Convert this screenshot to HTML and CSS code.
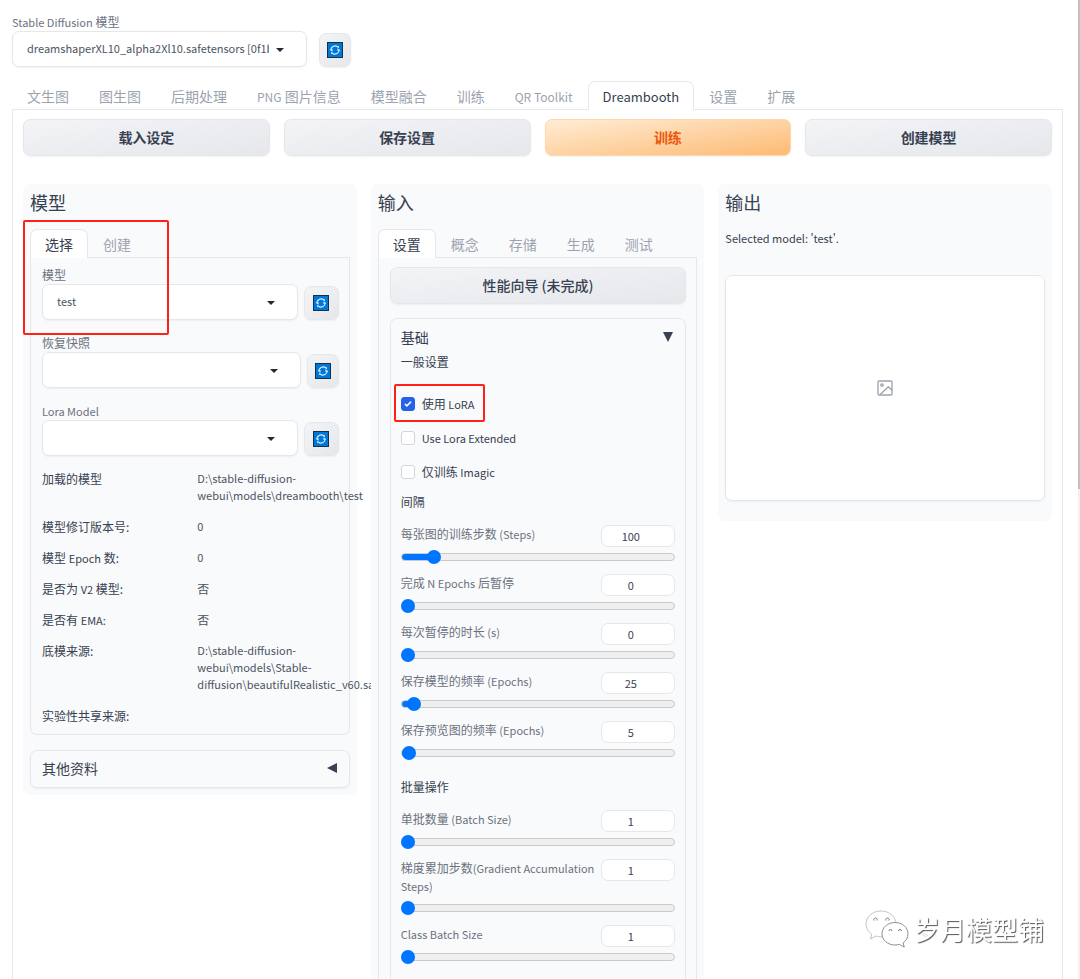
FILE: index.html
```html
<!DOCTYPE html>
<html lang="zh-CN">
<head>
<meta charset="utf-8">
<meta name="viewport" content="width=device-width, initial-scale=1">
<title>Stable Diffusion - Dreambooth</title>
<link rel="stylesheet" href="styles.css">
</head>
<body>
<svg class="defs" aria-hidden="true">
  <symbol id="refresh" viewBox="0 0 16 16">
    <rect x="0.5" y="0.5" width="15" height="15" fill="#0078d7" stroke="#17304a"/>
    <g fill="none" stroke="#d6ebff" stroke-width="1.1">
      <path d="M4 8.600A4.100 4.100 0 0 1 10.800 5M12 7.400A4.100 4.100 0 0 1 5.200 11"/>
    </g>
    <path d="M2.700 7.200h2.900v2.600zM13.300 8.800h-2.900V6.200zM9.500 4.200h2.500v2.300zM6.500 11.800H4V9.500z" fill="#d6ebff"/>
  </symbol>
  <symbol id="caret" viewBox="0 0 8 4"><path d="M0 0h8L4 4z" fill="#1f2937"/></symbol>
</svg>

<div class="page">
  <header class="checkpoint">
    <div class="field checkpoint-field">
      <label for="checkpoint"><span class="latin">Stable Diffusion</span> 模型</label>
      <div class="select">
        <select id="checkpoint"><option>dreamshaperXL10_alpha2Xl10.safetensors [0f1b80cfe8]</option></select>
        <svg class="caret"><use href="#caret"/></svg>
      </div>
    </div>
    <button class="tool tool-narrow" type="button" aria-label="刷新"><svg><use href="#refresh"/></svg></button>
  </header>

  <nav class="tabs">
    <button type="button">文生图</button>
    <button type="button">图生图</button>
    <button type="button">后期处理</button>
    <button type="button"><span class="latin">PNG</span> 图片信息</button>
    <button type="button">模型融合</button>
    <button type="button">训练</button>
    <button type="button"><span class="latin">QR Toolkit</span></button>
    <button type="button" class="selected"><span class="latin">Dreambooth</span></button>
    <button type="button">设置</button>
    <button type="button">扩展</button>
  </nav>

  <main class="workspace">
    <div class="actions">
      <button class="btn" type="button">载入设定</button>
      <button class="btn" type="button">保存设置</button>
      <button class="btn primary" type="button">训练</button>
      <button class="btn" type="button">创建模型</button>
    </div>

    <div class="columns">
      <section class="panel">
        <h2>模型</h2>
        <div class="tabs">
          <button type="button" class="selected">选择</button>
          <button type="button">创建</button>
        </div>
        <div class="tab-body model-body">
          <div class="row">
            <div class="field">
              <label for="model">模型</label>
              <div class="select">
                <select id="model"><option>test</option></select>
                <svg class="caret"><use href="#caret"/></svg>
              </div>
            </div>
            <button class="tool" type="button" aria-label="刷新"><svg><use href="#refresh"/></svg></button>
          </div>
          <div class="row">
            <div class="field">
              <label for="snapshot">恢复快照</label>
              <div class="select">
                <select id="snapshot"><option></option></select>
                <svg class="caret"><use href="#caret"/></svg>
              </div>
            </div>
            <button class="tool tool-narrow" type="button" aria-label="刷新"><svg><use href="#refresh"/></svg></button>
          </div>
          <div class="row">
            <div class="field">
              <label for="lora"><span class="latin">Lora Model</span></label>
              <div class="select">
                <select id="lora"><option></option></select>
                <svg class="caret"><use href="#caret"/></svg>
              </div>
            </div>
            <button class="tool" type="button" aria-label="刷新"><svg><use href="#refresh"/></svg></button>
          </div>
          <dl class="info">
            <dt>加载的模型</dt><dd class="latin">D:\stable-diffusion-webui\models\dreambooth\test</dd>
            <dt>模型修订版本号:</dt><dd class="latin">0</dd>
            <dt>模型 <span class="latin">Epoch</span> 数:</dt><dd class="latin">0</dd>
            <dt>是否为 <span class="latin">V2</span> 模型:</dt><dd>否</dd>
            <dt>是否有 <span class="latin">EMA:</span></dt><dd>否</dd>
            <dt>底模来源:</dt><dd class="latin">D:\stable-diffusion-webui\models\Stable-diffusion\beautifulRealistic_v60.safetensors</dd>
            <dt>实验性共享来源:</dt><dd></dd>
          </dl>
        </div>
        <button class="accordion" type="button" aria-expanded="false">
          <span>其他资料</span>
          <svg viewBox="0 0 10 10" aria-hidden="true"><path d="M10 0v10L0 5z" fill="#374151"/></svg>
        </button>
        <div class="mark mark-model"></div>
      </section>

      <section class="panel">
        <h2>输入</h2>
        <div class="tabs">
          <button type="button" class="selected">设置</button>
          <button type="button">概念</button>
          <button type="button">存储</button>
          <button type="button">生成</button>
          <button type="button">测试</button>
        </div>
        <div class="tab-body input-body">
          <button class="btn" type="button">性能向导 (未完成)</button>
          <div class="group">
            <button class="group-head" type="button" aria-expanded="true">
              <span>基础</span>
              <svg viewBox="0 0 10 10" aria-hidden="true"><path d="M0 0h10L5 10z" fill="#374151"/></svg>
            </button>
            <h3>一般设置</h3>
            <div class="checks">
              <label class="check"><input type="checkbox" checked><span>使用 <span class="latin">LoRA</span></span><span class="mark mark-lora"></span></label>
              <label class="check"><input type="checkbox"><span class="latin">Use Lora Extended</span></label>
              <label class="check"><input type="checkbox"><span>仅训练 <span class="latin">Imagic</span></span></label>
            </div>
            <h3>间隔</h3>
            <div class="sliders">
              <div class="slider">
                <div class="slider-head"><label for="steps">每张图的训练步数 <span class="latin">(Steps)</span></label><input id="steps" type="number" value="100"></div>
                <input type="range" aria-label="每张图的训练步数" max="1000" value="100" style="--fill:11%">
              </div>
              <div class="slider">
                <div class="slider-head"><label for="pause">完成 <span class="latin">N Epochs</span> 后暂停</label><input id="pause" type="number" value="0"></div>
                <input type="range" aria-label="完成 N Epochs 后暂停" max="1000" value="0" style="--fill:0%">
              </div>
              <div class="slider">
                <div class="slider-head"><label for="wait">每次暂停的时长 <span class="latin">(s)</span></label><input id="wait" type="number" value="0"></div>
                <input type="range" aria-label="每次暂停的时长" max="1000" value="0" style="--fill:0%">
              </div>
              <div class="slider">
                <div class="slider-head"><label for="save">保存模型的频率 <span class="latin">(Epochs)</span></label><input id="save" type="number" value="25"></div>
                <input type="range" aria-label="保存模型的频率" max="1000" value="25" style="--fill:4%">
              </div>
              <div class="slider">
                <div class="slider-head"><label for="preview">保存预览图的频率 <span class="latin">(Epochs)</span></label><input id="preview" type="number" value="5"></div>
                <input type="range" aria-label="保存预览图的频率" max="1000" value="5" style="--fill:1%">
              </div>
            </div>
            <h3>批量操作</h3>
            <div class="sliders">
              <div class="slider">
                <div class="slider-head"><label for="batch">单批数量 <span class="latin">(Batch Size)</span></label><input id="batch" type="number" value="1"></div>
                <input type="range" aria-label="单批数量" min="1" max="100" value="1" style="--fill:0%">
              </div>
              <div class="slider">
                <div class="slider-head"><label for="grad">梯度累加步数<span class="latin">(Gradient Accumulation Steps)</span></label><input id="grad" type="number" value="1"></div>
                <input type="range" aria-label="梯度累加步数" min="1" max="100" value="1" style="--fill:0%">
              </div>
              <div class="slider">
                <div class="slider-head"><label for="class-batch"><span class="latin">Class Batch Size</span></label><input id="class-batch" type="number" value="1"></div>
                <input type="range" aria-label="Class Batch Size" min="1" max="100" value="1" style="--fill:0%">
              </div>
            </div>
          </div>
        </div>
      </section>

      <section class="panel output">
        <h2>输出</h2>
        <p class="latin">Selected model: 'test'.</p>
        <div class="gallery">
          <svg viewBox="0 0 24 24" fill="none" stroke="#9ca3af" stroke-width="2" stroke-linecap="round" stroke-linejoin="round" aria-hidden="true">
            <rect x="1.5" y="1.5" width="21" height="21" rx="2"/>
            <circle cx="7.5" cy="7.5" r="1.8"/>
            <path d="M22 15l-5-5L4.500 22"/>
          </svg>
        </div>
      </section>
    </div>
  </main>
</div>

<div class="scrollbar" aria-hidden="true"></div>

<div class="watermark">
  <svg viewBox="0 0 44 38" aria-hidden="true">
    <g fill="#fff" stroke-width="1">
      <path stroke="#c4c4c4" d="M16 1C7.500 1 1 6.800 1 14c0 4.200 2.200 7.800 5.800 10.200L5.500 29l5.500-3c1.600.5 3.300.8 5 .8C24.500 26.800 31 21 31 14S24.500 1 16 1z"/>
      <path stroke="#8f8f8f" d="M30 12.500c-7.400 0-13 5-13 11.300S22.600 35 30 35c1.500 0 3-.2 4.300-.6l5 2.700-1.200-4.200c3-2 4.900-5.300 4.900-9.100 0-6.300-5.600-11.300-13-11.300z"/>
    </g>
    <g fill="#fff" stroke="#777" stroke-width="1">
      <path d="M9 10.500a1.700 1.700 0 1 1 3 0M21 10.500a1.700 1.700 0 1 1 3 0M24 21a1.500 1.500 0 1 1 3 0M33.500 21a1.500 1.500 0 1 1 3 0"/>
    </g>
  </svg>
  <span>岁月模型铺</span>
</div>
</body>
</html>
```

FILE: styles.css
```css
* { box-sizing: border-box; }

body {
  margin: 0;
  height: 100vh;
  overflow: hidden;
  background: #fff;
  color: #374151;
  font: 12px/18px "Noto Sans CJK SC", sans-serif;
}

button, input, select { font: inherit; color: inherit; margin: 0; }
button { padding: 0; border: 0; background: none; }
h2, h3, p, dl, dd { margin: 0; font-weight: 400; }
h3 { font-size: 12px; }
.latin, select, input { font-size: 11px; }
.defs { position: absolute; width: 0; height: 0; }

.page { padding: 13px 17px 0 12px; }

/* Fields */
.checkpoint { display: flex; align-items: flex-end; gap: 12px; }
.checkpoint-field { flex: 0 0 295px; }
.field label { display: block; height: 18px; color: #6b7280; }
.select { position: relative; }
.select select {
  display: block;
  width: 100%;
  height: 36px;
  padding: 0 37px 2px 14px;
  appearance: none;
  border: 1px solid #e5e7eb;
  border-radius: 7px;
  background: #fff;
  box-shadow: 0 1px 2px rgba(0, 0, 0, .05);
  color: #4b5563;
}
.caret { position: absolute; right: 23px; top: 17px; width: 8px; height: 4px; pointer-events: none; }

.tool {
  display: grid;
  place-items: center;
  flex: 0 0 35px;
  height: 34px;
  border: 1px solid #e5e7eb;
  border-radius: 7px;
  background: linear-gradient(to bottom right, #f3f4f6, #e5e7eb);
  box-shadow: 0 1px 2px rgba(0, 0, 0, .05);
}
.tool-narrow { flex-basis: 32px; }
.tool svg { width: 16px; height: 16px; }

/* Tabs */
.tabs { display: flex; border-bottom: 1px solid #e5e7eb; }
.tabs button {
  height: 29px;
  margin-bottom: -1px;
  padding: 0 14px;
  border: 1px solid transparent;
  border-bottom: 0;
  border-radius: 7px 7px 0 0;
  color: #9ca3af;
  font-size: 14px;
}
.tabs .latin { font-size: 12px; }
.tabs .selected { border-color: #e5e7eb; background: #fff; color: #374151; }
.tabs .selected .latin { font-size: 13px; }
.page > .tabs { margin-top: 14px; }

.workspace { padding: 9px 10px 0; border: solid #e5e7eb; border-width: 0 1px; }

.btn {
  height: 37px;
  padding-bottom: 2px;
  border: 1px solid #e5e7eb;
  border-radius: 7px;
  background: linear-gradient(to bottom right, #f3f4f6, #e5e7eb);
  box-shadow: 0 1px 2px rgba(0, 0, 0, .05);
  font-size: 14px;
  font-weight: 600;
}
.input-body > .btn { width: 100%; font-weight: 500; }
.btn.primary {
  border-color: #fed7aa;
  background: linear-gradient(to bottom right, #ffedd5, #fdba74);
  color: #ea580c;
}

.actions { display: grid; grid-template-columns: repeat(4, 1fr); gap: 14px; }
.columns {
  display: grid;
  grid-template-columns: repeat(3, minmax(0, 1fr));
  align-items: start;
  gap: 14px;
  margin-top: 28px;
}

/* Panels */
.panel { position: relative; padding: 7px; border-radius: 7px; background: #f9fafb; }
.panel h2 { margin-bottom: 16px; font-size: 18px; line-height: 22px; }
.tab-body { border: 1px solid #e5e7eb; border-top: 0; border-radius: 0 0 7px 7px; }
.model-body { display: grid; gap: 14px; padding: 8px 10px 10px 11px; }
.row { display: flex; align-items: flex-end; gap: 6px; }
.row .field { flex: 1; }

.info {
  display: grid;
  grid-template-columns: repeat(2, minmax(0, 1fr));
  gap: 14px;
  line-height: 17px;
}
.info dt { height: 17px; }
.info dd { color: #4b5563; }

.accordion {
  display: flex;
  align-items: center;
  justify-content: space-between;
  width: 100%;
  height: 38px;
  margin-top: 15px;
  padding: 0 12px 2px 11px;
  border: 1px solid #e5e7eb;
  border-radius: 7px;
  box-shadow: 0 1px 2px rgba(0, 0, 0, .05);
  font-size: 14px;
}
.accordion svg, .group-head svg { width: 10px; height: 10px; }

/* Training settings */
.input-body { height: 900px; padding: 9px 10px 10px 11px; }
.group {
  height: 800px;
  margin-top: 14px;
  padding: 9px 10px;
  border: 1px solid #e5e7eb;
  border-radius: 7px;
}
.group-head {
  display: flex;
  align-items: center;
  justify-content: space-between;
  width: 100%;
  height: 18px;
  padding-right: 2px;
  font-size: 14px;
}
.group-head + h3 { margin-top: 7px; }
.checks { display: grid; gap: 16px; margin: 24px 0 12px; }
.check { position: relative; display: flex; align-items: center; gap: 7px; justify-self: start; height: 18px; }
.check input {
  width: 14px;
  height: 14px;
  appearance: none;
  border: 1px solid #d1d5db;
  border-radius: 3px;
  background: #fff;
}
.check input:checked {
  border-color: #2563eb;
  background: #2563eb url("data:image/svg+xml,%3Csvg viewBox='0 0 16 16' fill='white' xmlns='http://www.w3.org/2000/svg'%3E%3Cpath d='M12.207 4.793a1 1 0 010 1.414l-5 5a1 1 0 01-1.414 0l-2-2a1 1 0 011.414-1.414L6.500 9.086l4.293-4.293a1 1 0 011.414 0z'/%3E%3C/svg%3E") center / 100%;
}

.sliders { display: grid; gap: 9px; margin: 14px 0 17px; }
.slider-head { display: flex; align-items: flex-start; justify-content: space-between; gap: 4px; }
.slider-head label { max-height: 39px; padding-bottom: 3px; color: #6b7280; }
.slider-head input {
  flex: 0 0 74px;
  width: 74px;
  height: 22px;
  padding: 0;
  border: 1px solid #e5e7eb;
  border-radius: 7px;
  background: #fff;
  text-align: center;
}
.slider-head input::-webkit-inner-spin-button { opacity: 0; }

.slider input[type="range"] {
  display: block;
  width: 100%;
  height: 16px;
  margin-top: 2px;
  appearance: none;
  background: none;
}
.slider input::-webkit-slider-runnable-track {
  height: 8px;
  border: 1px solid #cacaca;
  border-radius: 4px;
  background: linear-gradient(#0075ff, #0075ff) 0 0 / var(--fill) 100% no-repeat border-box, #efefef;
}
.slider input::-webkit-slider-thumb {
  width: 14px;
  height: 14px;
  margin: -4px -1px 0;
  appearance: none;
  border-radius: 50%;
  background: #0075ff;
}

/* Output */
.output { padding-bottom: 20px; }
.gallery {
  display: grid;
  place-items: center;
  height: 226px;
  margin-top: 28px;
  border: 1px solid #e5e7eb;
  border-radius: 7px;
  background: #fff;
  box-shadow: 0 1px 2px rgba(0, 0, 0, .05);
}
.gallery svg { width: 16px; height: 16px; }

/* Annotations and overlays */
.mark { position: absolute; border: 2px solid #ff2116; border-radius: 2px; pointer-events: none; }
.mark-model { left: 0; top: 36px; width: 146px; height: 115px; }
.mark-lora { inset: -11px -11px -9px -7px; }

.scrollbar {
  position: fixed;
  top: 0;
  right: 0;
  width: 2px;
  height: 100vh;
  background: linear-gradient(#c1c1c1 0 50%, #f1f1f1 50%);
}

.watermark {
  position: fixed;
  right: 36px;
  bottom: 31px;
  display: flex;
  align-items: center;
  gap: 5px;
  color: #fff;
  font-size: 26px;
  line-height: 38px;
  text-shadow: 1px 1px 1px #555;
}
.watermark svg { width: 44px; height: 38px; }
```
